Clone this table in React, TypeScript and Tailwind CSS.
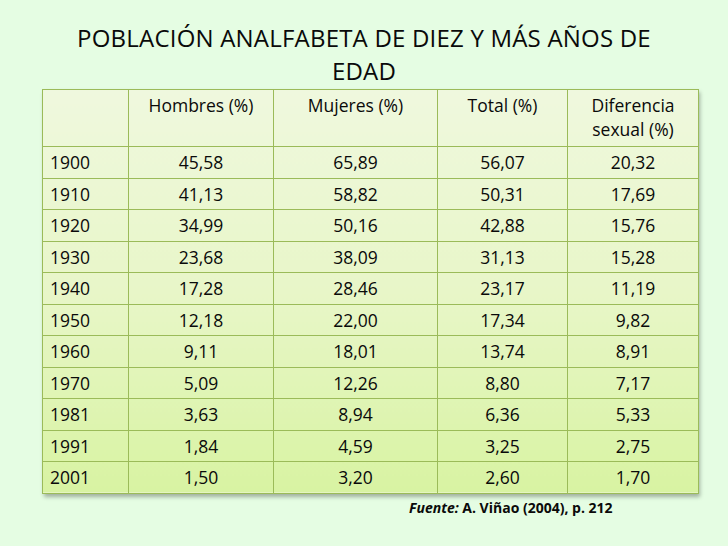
const rows: [string, string, string, string, string][] = [
  ["1900", "45,58", "65,89", "56,07", "20,32"],
  ["1910", "41,13", "58,82", "50,31", "17,69"],
  ["1920", "34,99", "50,16", "42,88", "15,76"],
  ["1930", "23,68", "38,09", "31,13", "15,28"],
  ["1940", "17,28", "28,46", "23,17", "11,19"],
  ["1950", "12,18", "22,00", "17,34", "9,82"],
  ["1960", "9,11", "18,01", "13,74", "8,91"],
  ["1970", "5,09", "12,26", "8,80", "7,17"],
  ["1981", "3,63", "8,94", "6,36", "5,33"],
  ["1991", "1,84", "4,59", "3,25", "2,75"],
  ["2001", "1,50", "3,20", "2,60", "1,70"],
];

const cell = "border border-[#9bbb59] p-0";

export default function App() {
  return (
    <div
      className="w-[728px] h-[546px] bg-[#e5fde3] text-[#0a0a0a] overflow-hidden"
      style={{ fontFamily: '"Open Sans", sans-serif' }}
    >
      <h1 className="pt-[21px] text-center text-[24px] leading-[33px] tracking-[0.2px] font-normal">
        POBLACIÓN ANALFABETA DE DIEZ Y MÁS AÑOS DE
        <br />
        EDAD
      </h1>

      <div className="ml-[42px] mt-[2px] w-[656px] shadow-[2px_3px_4px_rgba(0,0,0,0.3)]">
        <table className="w-full border-collapse table-fixed bg-linear-to-b from-[#eff8de] via-[#e8f6c8] to-[#d8f3a2] text-[17.5px]">
          <colgroup>
            <col className="w-[86px]" />
            <col className="w-[145px]" />
            <col className="w-[164px]" />
            <col className="w-[130px]" />
            <col className="w-[131px]" />
          </colgroup>
          <thead>
            <tr className="h-[57px] align-top leading-[24px]">
              <th className={cell}></th>
              <th className={`${cell} pt-[3px] font-normal text-center`}>Hombres (%)</th>
              <th className={`${cell} pt-[3px] font-normal text-center`}>Mujeres (%)</th>
              <th className={`${cell} pt-[3px] font-normal text-center`}>Total (%)</th>
              <th className={`${cell} pt-[3px] font-normal text-center`}>
                Diferencia
                <br />
                sexual (%)
              </th>
            </tr>
          </thead>
          <tbody>
            {rows.map((r) => (
              <tr key={r[0]} className="h-[31.5px] leading-[24px]">
                <td className={`${cell} pl-[7px] text-left`}>{r[0]}</td>
                {r.slice(1).map((v, i) => (
                  <td key={i} className={`${cell} text-center`}>
                    {v}
                  </td>
                ))}
              </tr>
            ))}
          </tbody>
        </table>
      </div>

      <p className="ml-[409px] mt-[4px] text-[14px] leading-[20px] font-bold">
        <span className="italic">Fuente:</span> A. Viñao (2004), p. 212
      </p>
    </div>
  );
}
